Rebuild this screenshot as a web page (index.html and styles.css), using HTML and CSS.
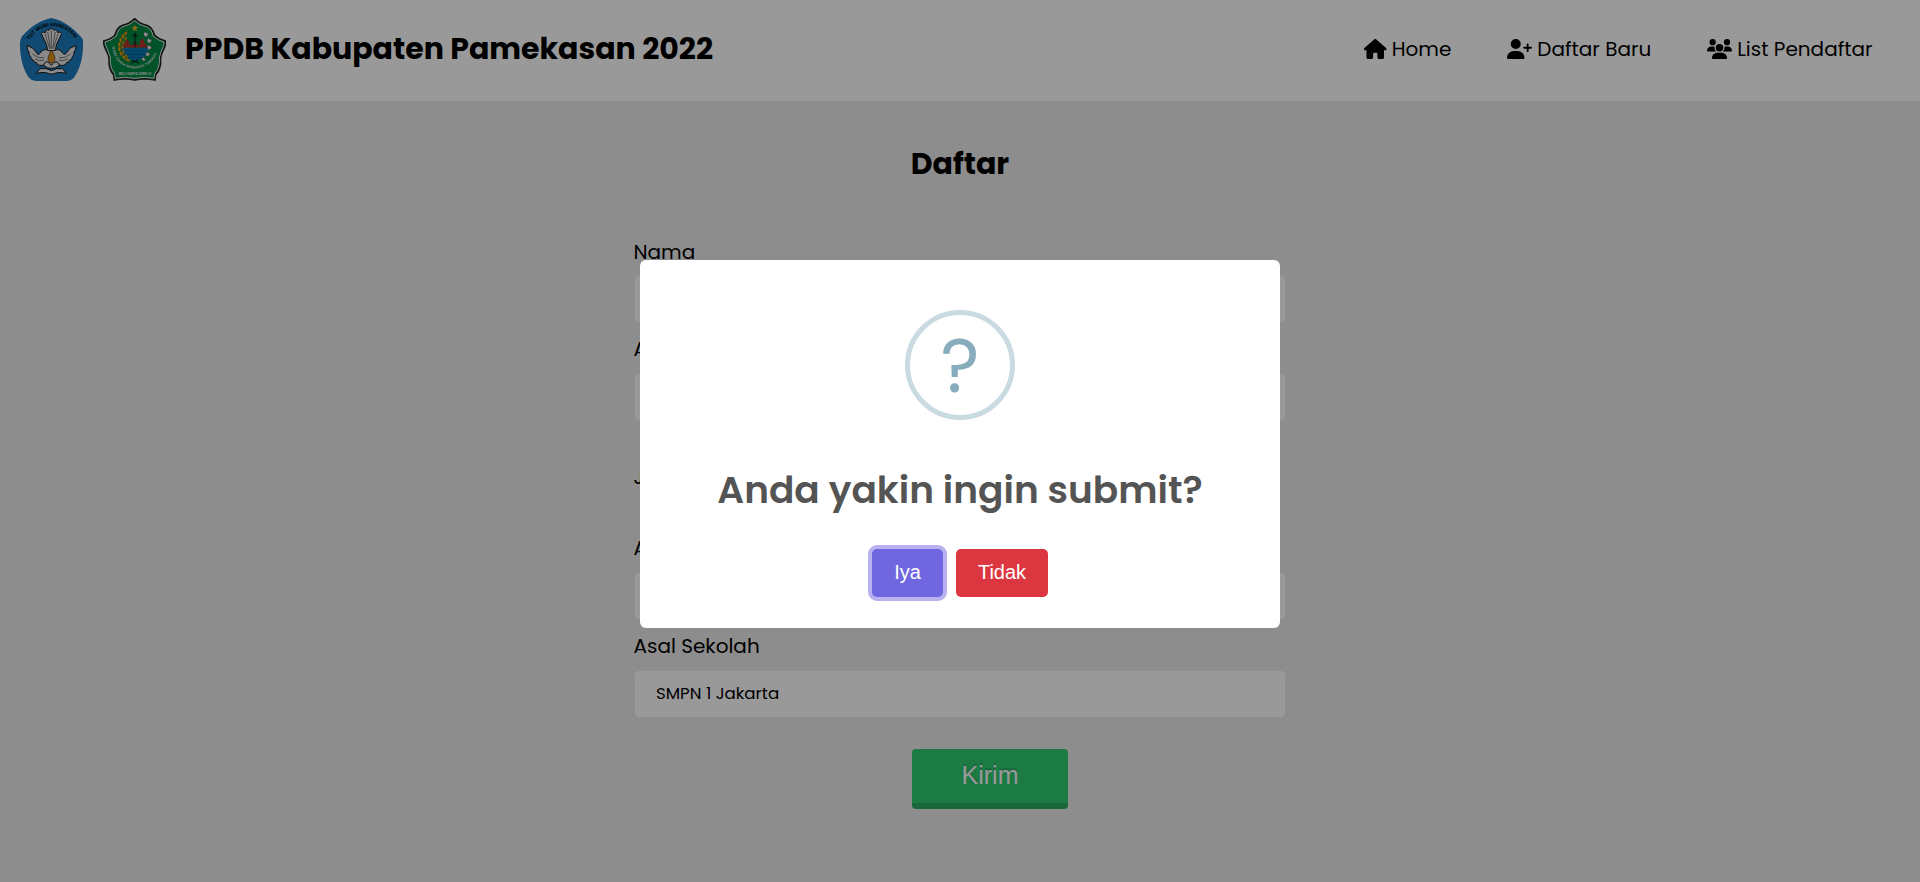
FILE: index.html
```html
<!DOCTYPE html>
<html lang="id">
<head>
    <meta charset="UTF-8">
    <title>PPDB Kabupaten Pamekasan 2022</title>
    <link rel="stylesheet" href="styles.css">
</head>
<body>
    <header class="navbar">
        <div class="brand">
            <svg class="logo" viewBox="30 24 189 189">
                <path d="M124 24 C155 29 190 53 216 84 Q220 90 219 104 C220 142 209 181 191 204 Q184 212 172 213 H77 Q65 212 57 203 C39 178 29 140 30 100 Q30 87 36 79 C60 51 94 29 124 24Z" fill="#1b7abc"/>
                <path id="arc1" d="M59 90 A78.600 78.600 0 0 1 197 90" fill="none"/>
                <text class="motto"><textPath href="#arc1" textLength="163" lengthAdjust="spacingAndGlyphs">TUT WURI HANDAYANI</textPath></text>
                <g fill="#e4e4e4" stroke="#151515" stroke-width="3" stroke-linejoin="round">
                    <path d="M113 123 L110 105 L94 71 Q99 62 106 68 Q109 55 117 61 Q124 50 132 61 Q140 55 143 68 Q150 62 155 71 L139 105 L136 123Z"/>
                    <path d="M117 122 Q100 113 91 129 Q84 138 78 126 Q72 113 51 106 Q51 121 58 129 Q54 132 62 140 Q61 146 69 150 Q70 157 80 158 Q79 164 89 166 H161 Q170 164 169 158 Q179 157 180 150 Q188 146 187 140 Q195 132 191 129 Q198 121 198 106 Q177 113 171 126 Q165 138 158 129 Q149 113 132 122Z"/>
                    <path d="M100 166 Q109 144 124 166 Q140 144 149 166 Q137 176 124 175 Q112 176 100 166Z"/>
                    <path d="M79 190 L90 176 Q111 173 124 182 Q139 173 158 176 L169 190 Q145 184 130 192 H119 Q104 184 79 190Z"/>
                </g>
                <path d="M105 72 L119 116 M113 66 L121 116 M124 62 V116 M136 66 L128 116 M144 72 L130 116 M67 132 Q84 146 102 144 M74 147 Q88 154 102 151 M182 132 Q165 146 147 144 M175 147 Q161 154 147 151" fill="none" stroke="#444" stroke-width="2"/>
                <path d="M124 121 Q131 131 134 139 Q138 155 124 159 Q111 155 115 140 Q118 131 124 121Z" fill="#e38f12" stroke="#4a3410" stroke-width="2"/>
            </svg>
            <svg class="logo" viewBox="23 25 189 189">
                <path d="M118 27 Q132 43 154 47 Q172 54 177 76 Q190 89 210 94 Q213 104 202 125 Q193 142 196 161 Q192 185 181 195 L179 211 Q148 204 118 211 Q88 204 57 211 L55 195 Q43 181 41 161 Q44 142 34 125 Q23 104 25 94 Q47 89 59 76 Q64 54 82 47 Q103 43 118 27Z" fill="#008b43" stroke="#222" stroke-width="5"/>
                <path d="M118 33 Q132 47 153 51 Q169 57 173 79 Q188 93 206 97 Q207 105 198 124 Q190 142 192 161 Q188 182 178 192 L176 206 Q148 200 118 206 Q88 200 60 206 L58 192 Q47 178 45 161 Q48 142 38 124 Q29 105 29 97 Q48 93 63 79 Q68 57 83 51 Q103 47 118 33Z" fill="none" stroke="#e8e8e8" stroke-width="3"/>
                <path d="M119 45 L122 52 L129 52 L123 57 L125 65 L119 60 L112 65 L114 57 L108 52 L116 52Z" fill="#e8b32a"/>
                <path d="M76 114 L88 101 L93 89 L99 93 L105 108 L118 101 L132 109 L136 91 L143 86 L149 102 L162 114Z" fill="#b9312b"/>
                <path d="M77 114 H161 Q158 143 119 157 Q82 143 77 114Z" fill="#087bb5"/>
                <path d="M82 124 H155 M86 134 H151 M95 144 H142" stroke="#055886" stroke-width="2"/>
                <path d="M119 72 V113 M111 79 H127 M115 73 H123 M114 100 H125 M109 151 L130 160 M129 150 L108 160" stroke="#111" stroke-width="3"/>
                <path d="M92 68 Q57 106 87 143 Q96 151 105 153" fill="none" stroke="#97751b" stroke-width="3"/>
                <g fill="#e1a522" stroke="#6c5815">
                    <ellipse cx="91" cy="71" rx="4" ry="7" transform="rotate(30 91 71)"/><ellipse cx="83" cy="80" rx="4" ry="7"/><ellipse cx="76" cy="91" rx="4" ry="7"/>
                    <ellipse cx="72" cy="104" rx="4" ry="7"/><ellipse cx="72" cy="118" rx="4" ry="7"/><ellipse cx="77" cy="132" rx="4" ry="7" transform="rotate(-20 77 132)"/>
                    <ellipse cx="86" cy="143" rx="4" ry="7" transform="rotate(-40 86 143)"/><ellipse cx="97" cy="151" rx="4" ry="7" transform="rotate(-65 97 151)"/>
                    <ellipse cx="91" cy="87" rx="3" ry="6" transform="rotate(35 91 87)"/><ellipse cx="84" cy="99" rx="3" ry="6" transform="rotate(30 84 99)"/>
                    <ellipse cx="81" cy="112" rx="3" ry="6"/><ellipse cx="84" cy="126" rx="3" ry="6"/><ellipse cx="93" cy="139" rx="3" ry="6" transform="rotate(-35 93 139)"/>
                </g>
                <g fill="#e8e8e8" stroke="#222">
                    <path d="M145 71 L149 66 L153 70 L159 69 L158 76 L153 82 L146 79Z"/>
                    <path d="M155 91 L160 85 L164 90 L170 89 L167 97 L161 101 L156 97Z"/>
                    <path d="M155 112 L160 105 L164 110 L170 111 L166 118 L159 121Z"/>
                    <path d="M151 133 L156 126 L160 131 L165 133 L160 139 L153 140Z"/>
                    <path d="M138 149 L143 142 L148 146 L151 151 L145 155Z"/>
                </g>
                <path id="arc2" d="M51 111 C57 198 179 198 188 111" fill="none"/>
                <text class="motto-small"><textPath href="#arc2" textLength="190">MADU GANDA MANGESTI TUNGGAL</textPath></text>
                <text class="year" x="70" y="195" textLength="97">MDLI KARYA DERE III</text>
            </svg>
            <h1 class="brand-title">PPDB Kabupaten Pamekasan 2022</h1>
        </div>
        <nav class="menu">
            <a class="menu-link">
                <svg class="icon" width="22.500" height="20" viewBox="0 0 576 512"><path d="M575.8 255.500c0 18-15 32.100-32 32.100h-32l.7 160.200c0 2.700-.2 5.400-.5 8.100V472c0 22.100-17.900 40-40 40h-88c-22.100 0-40-17.900-40-40v-88c0-17.700-14.300-32-32-32h-48c-17.700 0-32 14.300-32 32v88c0 22.100-17.900 40-40 40h-88c-22.100 0-40-17.900-40-40V287.600H32c-18 0-32-14-32-32.100 0-9 3-17 10-24L266.400 8c7-7 15-8 22-8s15 2 21 7l255.400 224.500c8 7 12 15 11 24z"/></svg>
                <span>Home</span>
            </a>
            <a class="menu-link">
                <svg class="icon" width="25" height="20" viewBox="0 0 640 512"><path d="M96 128a128 128 0 1 1 256 0A128 128 0 1 1 96 128zM0 482.300C0 383.800 79.800 304 178.300 304h91.400C368.200 304 448 383.800 448 482.300c0 16.400-13.300 29.700-29.700 29.700H29.700C13.300 512 0 498.700 0 482.300zM504 312v-64h-64c-13.300 0-24-10.700-24-24s10.700-24 24-24h64v-64c0-13.300 10.700-24 24-24s24 10.700 24 24v64h64c13.300 0 24 10.700 24 24s-10.700 24-24 24h-64v64c0 13.300-10.700 24-24 24s-24-10.700-24-24z"/></svg>
                <span>Daftar Baru</span>
            </a>
            <a class="menu-link">
                <svg class="icon" width="25" height="20" viewBox="0 0 640 512"><path d="M144 0a80 80 0 1 1 0 160A80 80 0 1 1 144 0zM512 0a80 80 0 1 1 0 160A80 80 0 1 1 512 0zM0 298.700C0 239.800 47.800 192 106.700 192h42.700c15.900 0 31 3.500 44.600 9.700-1.300 7.200-1.900 14.700-1.900 22.300 0 38.200 16.800 72.500 43.300 96H21.300C9.600 320 0 310.400 0 298.700zM405.300 320h-.7c26.600-23.500 43.300-57.800 43.300-96 0-7.600-.7-15-1.900-22.300 13.600-6.300 28.700-9.700 44.600-9.700h42.700C592.200 192 640 239.800 640 298.700c0 11.800-9.600 21.300-21.300 21.300H405.300zM224 224a96 96 0 1 1 192 0 96 96 0 1 1-192 0zM128 485.300C128 411.700 187.700 352 261.300 352h117.300C452.300 352 512 411.700 512 485.300c0 14.700-11.900 26.700-26.700 26.700H154.700c-14.700 0-26.700-11.900-26.700-26.700z"/></svg>
                <span>List Pendaftar</span>
            </a>
        </nav>
    </header>

    <main class="content">
        <h2 class="heading">Daftar</h2>
        <form class="form">
            <label class="label first" for="nama">Nama</label>
            <input class="input" type="text" id="nama">
            <label class="label" for="alamat">Alamat</label>
            <input class="input" type="text" id="alamat">
            <div class="gender">Jenis Kelamin</div>
            <label class="label" for="agama">Agama</label>
            <input class="input" type="text" id="agama">
            <label class="label" for="sekolah">Asal Sekolah</label>
            <input class="input" type="text" id="sekolah" value="SMPN 1 Jakarta">
            <button class="submit" type="button">Kirim</button>
        </form>
    </main>

    <div class="overlay">
        <div class="popup">
            <div class="popup-icon">?</div>
            <h2 class="popup-title">Anda yakin ingin submit?</h2>
            <div class="popup-actions">
                <button class="btn confirm">Iya</button>
                <button class="btn cancel">Tidak</button>
            </div>
        </div>
    </div>
</body>
</html>
```
FILE: styles.css
```css
* {
    box-sizing: border-box;
}

body {
    margin: 0;
    height: 100vh;
    overflow: hidden;
    background: #ececec;
    color: #000;
    font-family: Poppins, Inter, sans-serif;
}

.navbar {
    display: flex;
    justify-content: space-between;
    height: 101px;
    padding: 0 47.5px 0 20px;
    background: #fff;
}

.brand {
    display: flex;
    gap: 20px;
    padding-top: 18px;
}

.logo {
    width: 63px;
    height: 63px;
}

.motto {
    font: bold 16px "Liberation Sans", sans-serif;
}

.motto-small {
    font: bold 10px "Liberation Sans", sans-serif;
    fill: #e8e8e8;
}

.year {
    font: bold 9px "Liberation Sans", sans-serif;
    fill: #e8e8e8;
}

.brand-title {
    margin: 8px 0 0 -1px;
    font-size: 30px;
    font-weight: 700;
    line-height: 45px;
    white-space: nowrap;
}

.menu {
    display: flex;
    align-items: flex-start;
    gap: 56px;
    padding-top: 34px;
    font-size: 20px;
    font-weight: 400;
    line-height: 30px;
}

.menu-link {
    display: flex;
    gap: 5px;
    white-space: nowrap;
}

.icon {
    margin-top: 5px;
}

.heading {
    margin: 0;
    padding-top: 40px;
    height: 123px;
    text-align: center;
    font-size: 30px;
    line-height: 45px;
}

.form {
    width: 656px;
    margin: 0 auto;
    display: flex;
    flex-direction: column;
}

.label {
    height: 52px;
    padding: 12px 0 0 1.5px;
    font-size: 20px;
    line-height: 30px;
}

.first {
    padding-top: 13px;
}

.input {
    height: 46px;
    margin: 0 3px;
    padding: 0 20px 2px 21px;
    border: 0;
    border-radius: 4px;
    background: #fff;
    font-family: inherit;
    font-size: 16.667px;
}

.gender {
    height: 101px;
    padding: 42px 0 0 1.5px;
    font-size: 20px;
    line-height: 30px;
}

.submit {
    width: 156px;
    height: 60px;
    margin: 32px 0 0 280px;
    padding-bottom: 3px;
    border: 0;
    border-bottom: 6px solid #28ad60;
    border-radius: 4px;
    background: #2fcb71;
    color: #fff;
    font-family: "Liberation Sans", sans-serif;
    font-size: 25px;
    text-shadow: 0 -2px #27ae60;
}

.overlay {
    position: fixed;
    inset: 0;
    display: flex;
    justify-content: center;
    align-items: flex-start;
    padding-top: 260px;
    background: rgba(0, 0, 0, 0.4);
}

.popup {
    width: 640px;
    height: 368px;
    padding-top: 50px;
    border-radius: 6px;
    background: #fff;
    text-align: center;
}

.popup-icon {
    width: 110px;
    height: 110px;
    margin: 0 auto;
    border: 5px solid #c9dae1;
    border-radius: 50%;
    color: #87adbd;
    font-size: 75px;
    line-height: 102px;
}

.popup-title {
    margin: 40px 0 0;
    color: #545454;
    font-size: 37.5px;
    font-weight: 600;
    line-height: 60px;
    white-space: nowrap;
}

.popup-actions {
    display: flex;
    gap: 13px;
    margin: 29px 0 0 232px;
}

.btn {
    height: 48px;
    padding: 0 0 2px;
    border: 0;
    border-radius: 5px;
    color: #fff;
    font-family: "Liberation Sans", sans-serif;
    font-size: 20px;
}

.confirm {
    width: 71px;
    background: #7066e0;
    box-shadow: 0 0 0 4px #b8b3f0;
}

.cancel {
    width: 92px;
    background: #dc3741;
}
```
